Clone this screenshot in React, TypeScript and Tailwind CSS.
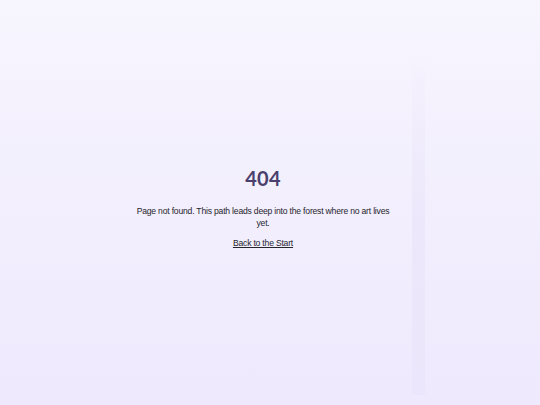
import React from 'react';

export default function App() {
  return (
    <div className="relative flex min-h-screen w-full items-center justify-center overflow-hidden bg-gradient-to-b from-[#f7f5fe] to-[#eee9fd] pr-[14px] pt-[8px] font-['Liberation_Sans',Arial,sans-serif]">
      {/* faint light streak on the right */}
      <div className="pointer-events-none absolute left-[412px] top-[55px] h-[340px] w-[13px] bg-gradient-to-b from-[#efecfb]/0 via-[#ece7fa] to-[#ebe6fb]" />
      <main className="relative flex w-[258px] flex-col items-center text-center">
        <h1 className="font-['Lato',sans-serif] text-[20px] font-bold leading-[28px] tracking-[0.3px] text-[#4b3f6c]">
          404
        </h1>
        <p className="mt-[13px] text-[8.6px] leading-[12px] tracking-[-0.2px] text-[#26252c]">
          Page not found. This path leads deep into the forest where no art lives yet.
        </p>
        <a href="#" className="mt-[8px] text-[8.6px] leading-[12px] tracking-[-0.2px] text-[#26252c] underline">
          Back to the Start
        </a>
      </main>
    </div>
  );
}
